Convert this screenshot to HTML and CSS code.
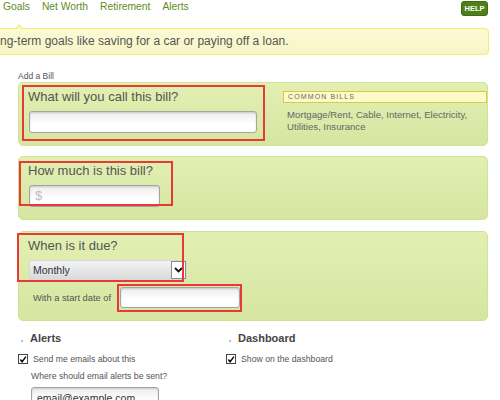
FILE: index.html
```html
<!DOCTYPE html>
<html lang="en">
<head>
  <meta charset="UTF-8" />
  <title>Add a Bill</title>
  <link rel="stylesheet" href="styles.css">
</head>
<body>
  <header class="topbar">
    <nav class="topnav">
      <ul>
        <li><a href="#">Goals</a></li>
        <li><a href="#">Net Worth</a></li>
        <li><a href="#">Retirement</a></li>
        <li><a href="#">Alerts</a></li>
      </ul>
    </nav>
    <a href="#" class="help-btn">HELP</a>
  </header>

  <div class="tip">ng-term goals like saving for a car or paying off a loan.</div>

  <main class="bill-form">
    <h2 class="form-title">Add a Bill</h2>

    <!-- Bill name -->
    <section class="panel panel-name">
      <div class="field">
        <label class="field-label">What will you call this bill?</label>
        <input type="text" class="text-input input-name">
      </div>
      <aside class="common">
        <div class="common-title">COMMON BILLS</div>
        <p class="common-list">Mortgage/Rent, Cable, Internet, Electricity, Utilities, Insurance</p>
      </aside>
      <span class="mark mark-name"></span>
    </section>

    <!-- Amount -->
    <section class="panel panel-amount">
      <div class="field">
        <label class="field-label">How much is this bill?</label>
        <input type="text" class="text-input input-amount" placeholder="$">
      </div>
      <span class="mark mark-amount"></span>
    </section>

    <!-- Due date -->
    <section class="panel panel-due">
      <div class="field">
        <label class="field-label">When is it due?</label>
        <div class="select">
          <span class="select-value">Monthly</span>
          <span class="select-arrow">
            <svg width="9" height="6" viewBox="0 0 9 6"><path d="M1 1l3.5 3.5L8 1" fill="none" stroke="#111" stroke-width="1.8"/></svg>
          </span>
        </div>
        <div class="start-row">
          <span class="start-label">With a start date of</span>
          <input type="text" class="text-input input-date">
        </div>
      </div>
      <span class="mark mark-due"></span>
      <span class="mark mark-date"></span>
    </section>

    <div class="options">
      <div class="option-col">
        <h3 class="option-title"><span class="dot"></span>Alerts</h3>
        <div class="check-row">
          <span class="check"><svg width="9" height="9" viewBox="0 0 9 9"><path d="M1.5 4.5l2 2.5L7.8 1.2" fill="none" stroke="#000" stroke-width="1.6"/></svg></span>
          <span>Send me emails about this</span>
        </div>
        <p class="email-label">Where should email alerts be sent?</p>
        <input type="text" class="text-input input-email" value="email@example.com">
      </div>
      <div class="option-col">
        <h3 class="option-title"><span class="dot"></span>Dashboard</h3>
        <div class="check-row">
          <span class="check"><svg width="9" height="9" viewBox="0 0 9 9"><path d="M1.5 4.5l2 2.5L7.8 1.2" fill="none" stroke="#000" stroke-width="1.6"/></svg></span>
          <span>Show on the dashboard</span>
        </div>
      </div>
    </div>
  </main>
</body>
</html>
```

FILE: styles.css
```css
:root {
  --text: #555;
  --nav-green: #5e8c1c;
  --panel-top: #e2efb2;
  --panel-bottom: #d6e6a1;
  --panel-border: #cfe391;
  --mark: #e8393a;
}

* {
  box-sizing: border-box;
}

body {
  margin: 0;
  font-family: "Liberation Sans", Arial, sans-serif;
  color: var(--text);
  background: #fff;
  overflow: hidden;
}

/* Top bar */
.topbar {
  display: flex;
  justify-content: space-between;
  align-items: flex-start;
  height: 20px;
  padding: 0 12px 0 3px;
}

.topnav ul {
  display: flex;
  gap: 12px;
  list-style: none;
  margin: 0;
  padding: 0;
}

.topnav a {
  display: block;
  color: var(--nav-green);
  font-size: 10.3px;
  line-height: 14px;
  text-decoration: none;
}

.help-btn {
  margin-top: 1px;
  width: 27px;
  height: 15px;
  line-height: 13px;
  text-align: center;
  font-size: 7.5px;
  font-weight: bold;
  color: #fff;
  text-decoration: none;
  background: #4d7f1b;
  border: 1px solid #3f6c13;
  border-radius: 3px;
}

/* Tip */
.tip {
  position: relative;
  margin: 8px 11px 0 -1px;
  height: 27px;
  line-height: 25px;
  font-size: 12px;
  color: var(--text);
  background: linear-gradient(#fcfad6, #f8f5c4);
  border: 1px solid #f4ee70;
  border-radius: 0 4px 4px 0;
}

.tip::before {
  content: '';
  position: absolute;
  left: 15px;
  top: -5px;
  width: 0;
  height: 0;
  border-left: 4px solid transparent;
  border-right: 4px solid transparent;
  border-bottom: 5px solid #f4ee70;
}

.tip::after {
  content: '';
  position: absolute;
  left: 16px;
  top: -3px;
  border-left: 3px solid transparent;
  border-right: 3px solid transparent;
  border-bottom: 4px solid #fcfad6;
}

/* Form */
.bill-form {
  width: 470px;
  margin-left: 18px;
}

.form-title {
  margin: 16px 0 1px;
  font-size: 8.5px;
  line-height: 10px;
  font-weight: normal;
}

.panel {
  position: relative;
  display: flex;
  padding: 6px 0 12px 9px;
  margin-bottom: 10px;
  background: linear-gradient(var(--panel-top), var(--panel-bottom));
  border: 1px solid var(--panel-border);
  border-radius: 5px;
}

.panel-due {
  margin-top: 11px;
}

.field {
  width: 259px;
}

.field-label {
  display: block;
  margin-bottom: 7px;
  font-size: 13px;
  line-height: 15px;
  color: #555;
}

.text-input {
  display: block;
  height: 22px;
  padding: 0 5px;
  font-family: inherit;
  font-size: 11px;
  color: #333;
  background: linear-gradient(#ececec, #fff 60%);
  border: 1px solid #a4a4a4;
  border-radius: 3px;
  box-shadow: inset 0 1px 2px rgba(0, 0, 0, 0.15);
  margin-left: 1px;
}

.text-input::placeholder {
  color: #bbb;
  font-size: 13px;
}

.input-name {
  width: 228px;
}

.input-amount {
  width: 131px;
}

/* Common bills */
.common {
  width: 207px;
  margin-top: 2px;
}

.common-title {
  height: 12px;
  line-height: 10px;
  padding-left: 4px;
  font-size: 7px;
  letter-spacing: 1.1px;
  color: #666;
  background: #fdfcc6;
  border: 1px solid #d6cb48;
}

.common-list {
  margin: 6px 0 0;
  padding-left: 4px;
  font-size: 9.6px;
  line-height: 12px;
  color: #666;
}

/* Select */
.select {
  display: flex;
  align-items: stretch;
  width: 158px;
  height: 20px;
  margin-left: 1px;
  background: linear-gradient(#f3f3f3, #dadada);
  border: 1px solid #d8d8d8;
  border-radius: 2px;
}

.select-value {
  flex: 1;
  padding-left: 3px;
  font-size: 10.5px;
  line-height: 18px;
  color: #2f3440;
}

.select-arrow {
  display: flex;
  align-items: center;
  justify-content: center;
  width: 15px;
  background: #fff;
  border: 1px solid #8a8a8a;
}

.start-row {
  display: flex;
  align-items: center;
  gap: 8px;
  margin-top: 7px;
  padding-left: 5px;
}

.start-label {
  font-size: 9.3px;
}

.input-date {
  width: 120px;
  height: 21px;
}

/* Annotation boxes */
.mark {
  position: absolute;
  border: 2px solid var(--mark);
  pointer-events: none;
}

.mark-name {
  left: 3px;
  top: 2px;
  width: 243px;
  height: 56px;
}

.mark-amount {
  left: 0;
  top: 4px;
  width: 154px;
  height: 45px;
}

.mark-due {
  left: -2px;
  top: 1px;
  width: 167px;
  height: 49px;
}

.mark-date {
  left: 98px;
  top: 52px;
  width: 125px;
  height: 28px;
}

/* Options */
.options {
  display: flex;
  margin-top: 2px;
}

.option-col {
  width: 208px;
}

.option-title {
  display: flex;
  align-items: center;
  margin: 0 0 9px;
  font-size: 11px;
  line-height: 14px;
  color: #444;
}

.dot {
  width: 2px;
  height: 2px;
  margin: 5px 7px 0 3px;
  background: #bbb;
}

.check-row {
  display: flex;
  align-items: center;
  gap: 5px;
  font-size: 8.7px;
}

.check {
  display: flex;
  align-items: center;
  justify-content: center;
  width: 10px;
  height: 10px;
  border: 1px solid #444;
  background: #fff;
}

.email-label {
  margin: 7px 0 6px 13px;
  font-size: 8.7px;
}

.input-email {
  width: 128px;
  margin-left: 13px;
  padding-left: 5px;
  font-size: 10.5px;
}
```
